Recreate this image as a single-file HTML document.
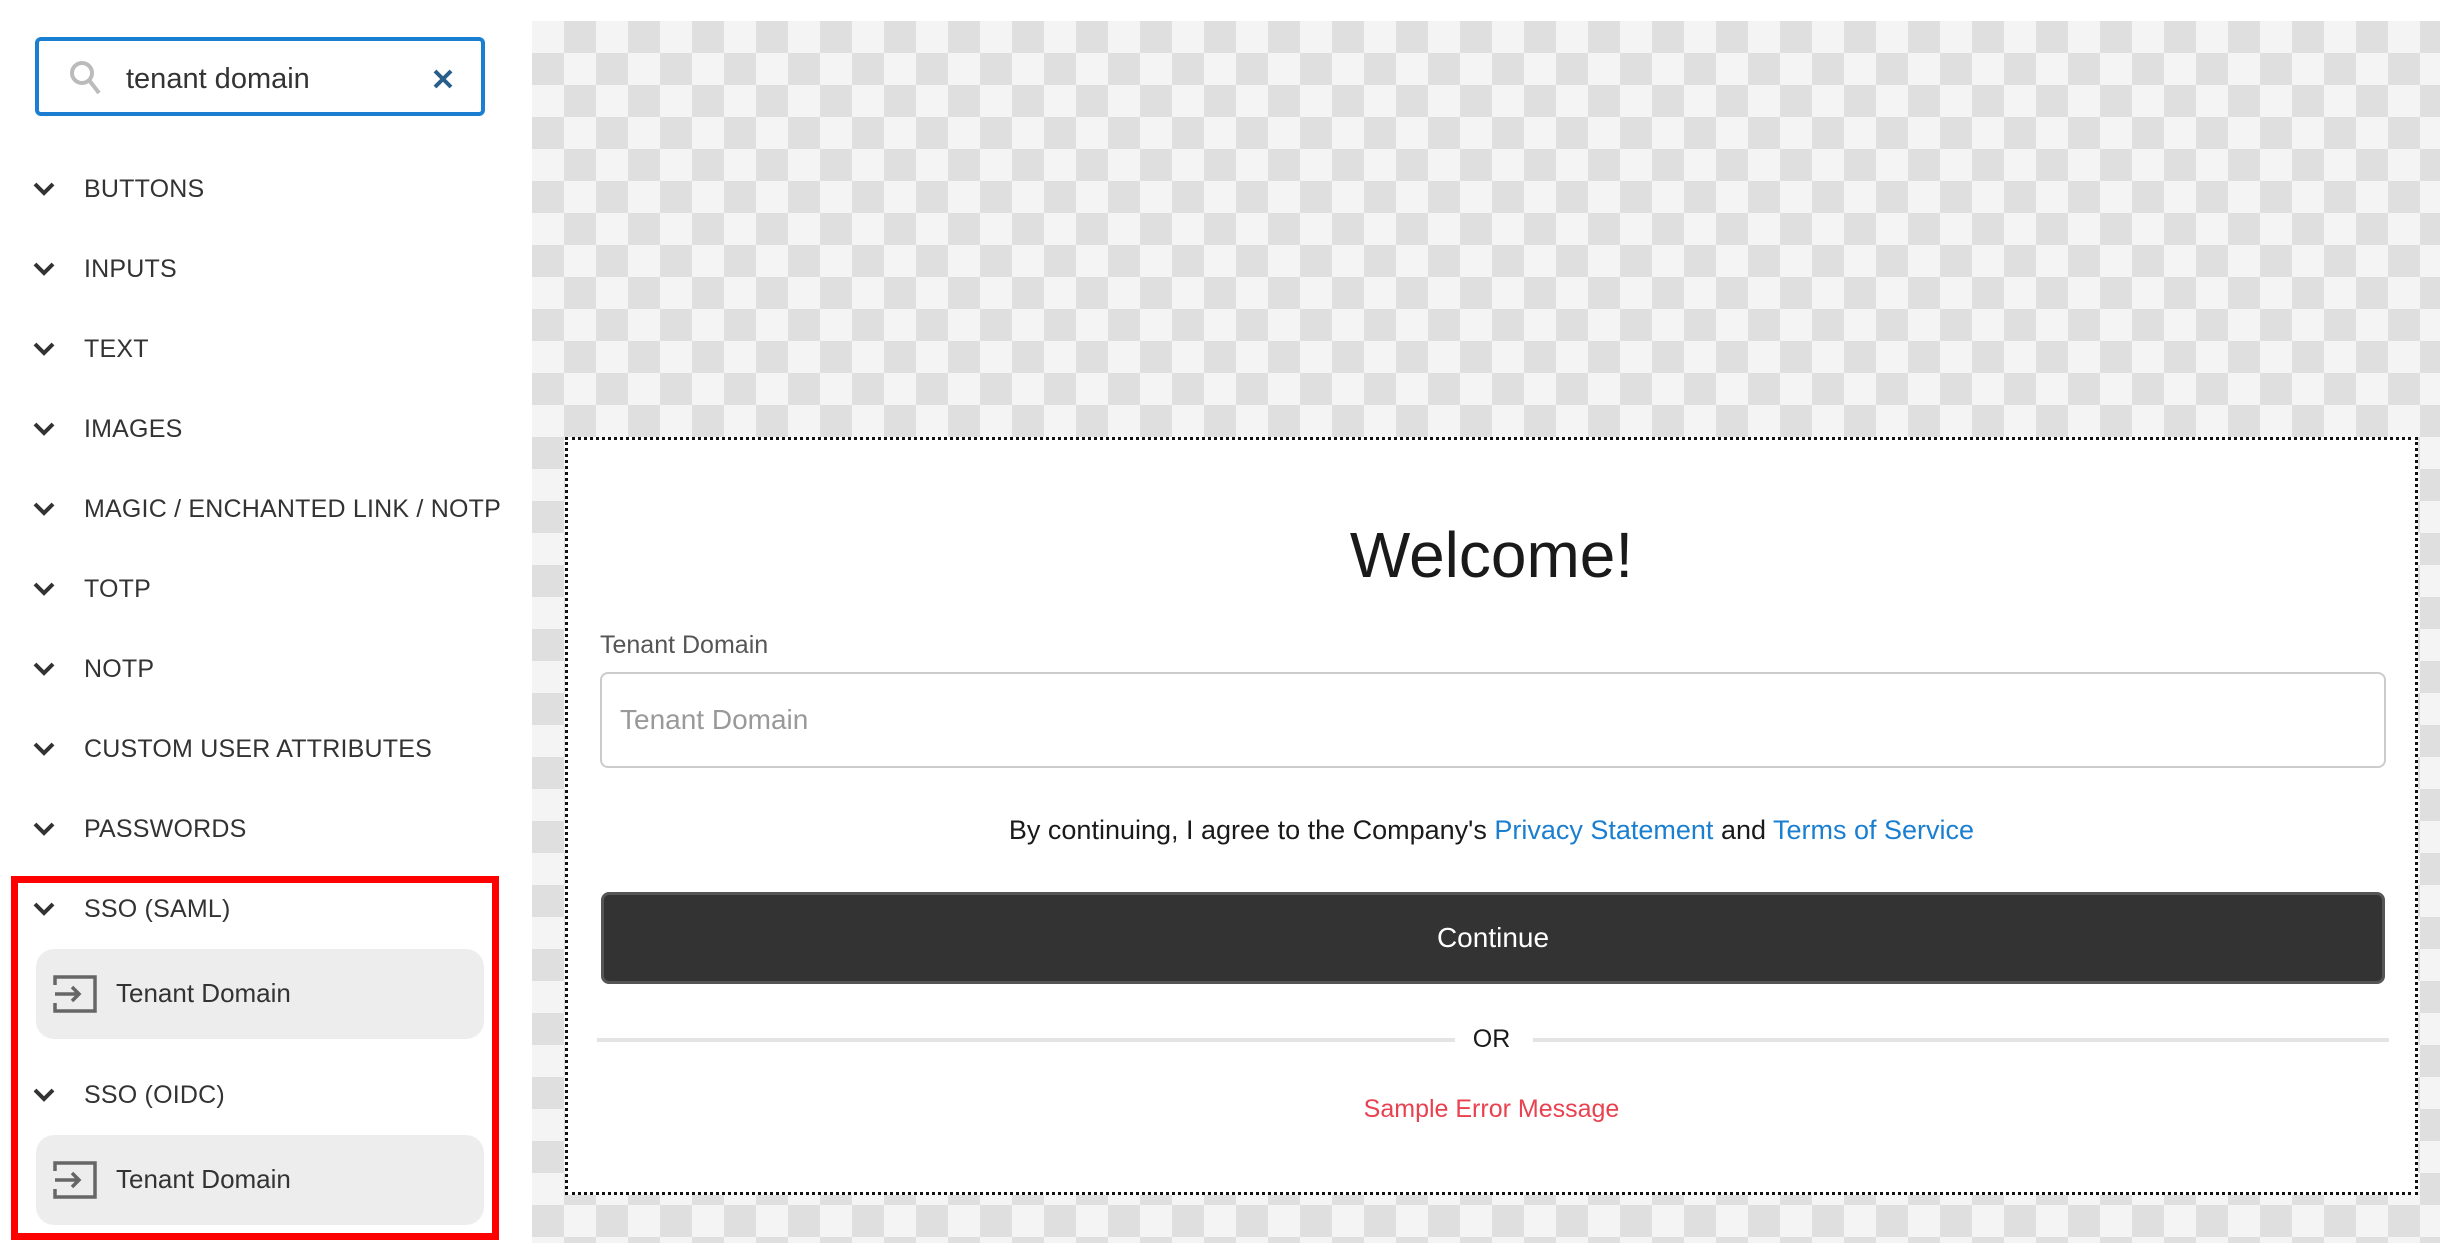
<!DOCTYPE html>
<html><head><meta charset="utf-8"><style>
*{box-sizing:border-box;margin:0;padding:0}
body{width:2440px;height:1243px;background:#fff;position:relative;overflow:hidden;font-family:"Liberation Sans",sans-serif;color:#333}
.abs{position:absolute}
.search{left:35px;top:37px;width:450px;height:79px;border:4px solid #1a7fd0;border-radius:6px}
.search .t{position:absolute;left:87px;top:22px;font-size:29px;color:#333}
.item{position:absolute;left:33px;font-size:25px;color:#333;letter-spacing:0.2px}
.item svg{position:absolute;left:0;top:6px}
.item span{position:absolute;left:51px;top:0;white-space:nowrap}
.card{position:absolute;left:36px;width:448px;height:90px;background:#ededed;border-radius:18px}
.card span{position:absolute;left:80px;top:29px;font-size:26px;color:#333}
.card svg{position:absolute;left:17px;top:26px}
.checker{left:532px;top:21px;width:1908px;height:1222px;background-color:#f4f4f4;background-image:linear-gradient(45deg,#dfdfdf 25%,transparent 25%,transparent 75%,#dfdfdf 75%),linear-gradient(45deg,#dfdfdf 25%,transparent 25%,transparent 75%,#dfdfdf 75%);background-size:64px 64px;background-position:0 0,32px 32px}
.box{left:565px;top:437px;width:1853px;height:758px;background:#fff;border:3px dotted #111}
.c{position:absolute;left:0;width:100%;text-align:center}
</style></head><body>
<div class="abs search">
<svg class="abs" style="left:30px;top:19px" width="34" height="36" viewBox="0 0 34 36"><circle cx="13" cy="13" r="10" fill="none" stroke="#bbb" stroke-width="4"/><line x1="20" y1="20" x2="30" y2="33" stroke="#bbb" stroke-width="4"/></svg>
<div class="t">tenant domain</div>
<svg class="abs" style="left:393px;top:27px" width="22" height="22" viewBox="0 0 22 22"><path d="M3 3L19 19M19 3L3 19" stroke="#2a5e8a" stroke-width="4"/></svg>
</div>
<div id="side"></div>
<script>
var labels=["BUTTONS","INPUTS","TEXT","IMAGES","MAGIC / ENCHANTED LINK / NOTP","TOTP","NOTP","CUSTOM USER ATTRIBUTES","PASSWORDS"];
var h="";
labels.forEach(function(l,i){h+='<div class="item" style="top:'+(175+i*80)+'px"><svg width="22" height="16" viewBox="0 0 22 16"><path d="M2 3L11 12L20 3" fill="none" stroke="#333" stroke-width="4"/></svg><span>'+l+'</span></div>';});
document.getElementById("side").innerHTML=h;
</script>
<div class="abs" style="left:11px;top:876px;width:488px;height:364px;border:7px solid #f00"></div>
<div class="item" style="top:895px"><svg width="22" height="16" viewBox="0 0 22 16"><path d="M2 3L11 12L20 3" fill="none" stroke="#333" stroke-width="4"/></svg><span>SSO (SAML)</span></div>
<div class="card" style="top:949px"><svg width="44" height="38" viewBox="0 0 44 38"><path d="M2 10V2H42V36H2V28" fill="none" stroke="#666" stroke-width="3.5"/><path d="M2 19H26M19 12L26 19L19 26" fill="none" stroke="#666" stroke-width="3.5"/></svg><span>Tenant Domain</span></div>
<div class="item" style="top:1081px"><svg width="22" height="16" viewBox="0 0 22 16"><path d="M2 3L11 12L20 3" fill="none" stroke="#333" stroke-width="4"/></svg><span>SSO (OIDC)</span></div>
<div class="card" style="top:1135px"><svg width="44" height="38" viewBox="0 0 44 38"><path d="M2 10V2H42V36H2V28" fill="none" stroke="#666" stroke-width="3.5"/><path d="M2 19H26M19 12L26 19L19 26" fill="none" stroke="#666" stroke-width="3.5"/></svg><span>Tenant Domain</span></div>

<div class="abs checker"></div>
<div class="abs box">
<div class="c" style="top:78px;font-size:64px;color:#1a1a1a">Welcome!</div>
<div class="abs" style="left:32px;top:191px;font-size:25px;color:#555">Tenant Domain</div>
<div class="abs" style="left:32px;top:232px;width:1786px;height:96px;border:2px solid #ccc;border-radius:8px"><span class="abs" style="left:18px;top:30px;font-size:28px;color:#999">Tenant Domain</span></div>
<div class="c" style="top:375px;font-size:27px;color:#1a1a1a">By continuing, I agree to the Company's <span style="color:#1a7fd0">Privacy Statement</span> and <span style="color:#1a7fd0">Terms of Service</span></div>
<div class="abs" style="left:33px;top:452px;width:1784px;height:92px;background:#333;border:3px solid #555;border-radius:8px"><div class="c" style="top:27px;font-size:28px;color:#fff">Continue</div></div>
<div class="abs" style="left:29px;top:598px;width:858px;height:4px;background:#e4e4e4"></div>
<div class="abs" style="left:965px;top:598px;width:856px;height:4px;background:#e4e4e4"></div>
<div class="c" style="top:585px;font-size:25px;color:#1a1a1a">OR</div>
<div class="c" style="top:655px;font-size:25px;color:#e8414f">Sample Error Message</div>
</div>
</body></html>
